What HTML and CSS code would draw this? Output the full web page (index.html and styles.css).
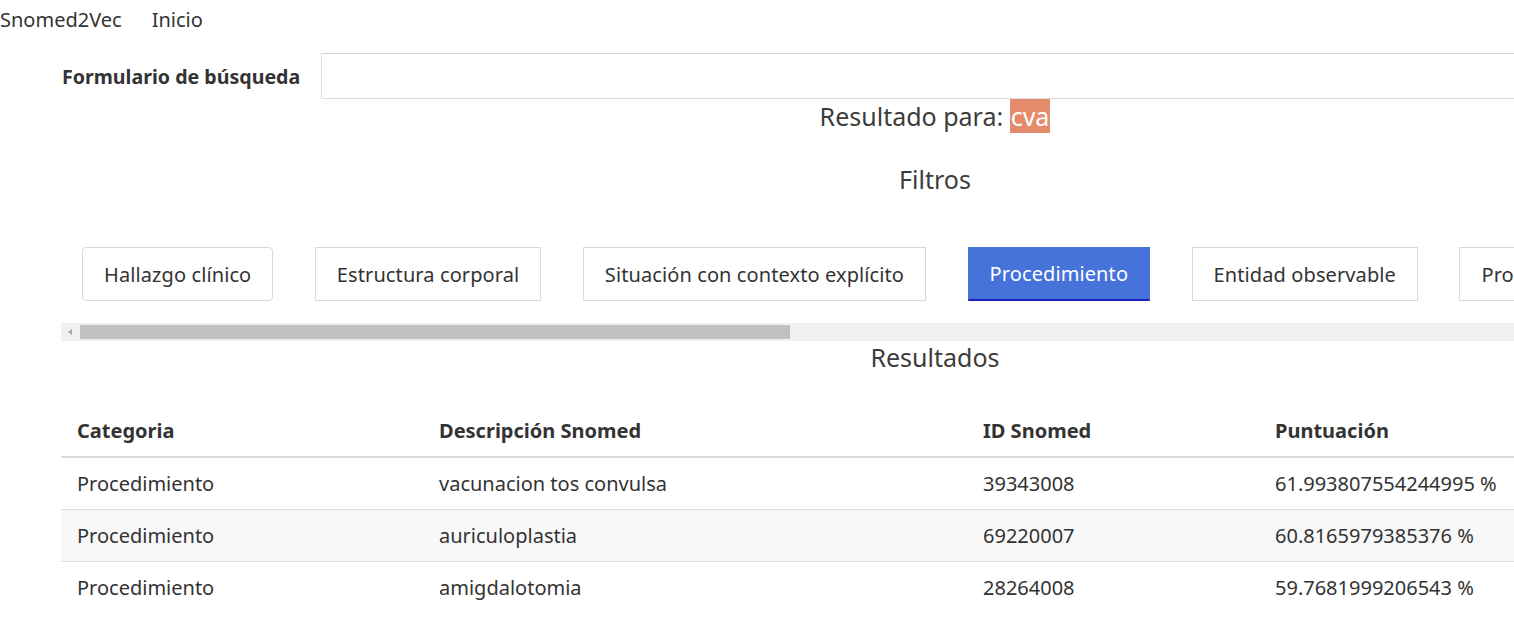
FILE: index.html
```html
<!DOCTYPE html>
<html lang="es">
<head>
<meta charset="utf-8">
<title>Snomed2Vec</title>
<link rel="stylesheet" href="styles.css">
</head>
<body>
<nav class="navbar">
  <a class="brand" href="#">Snomed2Vec</a>
  <a class="nav-link" href="#">Inicio</a>
</nav>
<main class="content">
  <form class="search-form">
    <label class="search-label" for="q">Formulario de búsqueda</label>
    <input class="search-input" id="q" type="text">
  </form>
  <h2 class="result-title">Resultado para: <mark class="query">cva</mark></h2>
  <h3 class="section-title filters-title">Filtros</h3>
  <div class="filters">
    <div class="filter-track">
      <button class="filter-btn first" type="button">Hallazgo clínico</button>
      <button class="filter-btn" type="button">Estructura corporal</button>
      <button class="filter-btn" type="button">Situación con contexto explícito</button>
      <button class="filter-btn active" type="button">Procedimiento</button>
      <button class="filter-btn" type="button">Entidad observable</button>
      <button class="filter-btn" type="button">Producto</button>
      <button class="filter-btn" type="button">Sustancia</button>
    </div>
    <div class="scrollbar">
      <span class="scroll-arrow"></span>
      <span class="scroll-thumb"></span>
    </div>
  </div>
  <h3 class="section-title results-title">Resultados</h3>
  <table class="results">
    <colgroup>
      <col class="c1"><col class="c2"><col class="c3"><col class="c4">
    </colgroup>
    <thead>
      <tr><th>Categoria</th><th>Descripción Snomed</th><th>ID Snomed</th><th>Puntuación</th></tr>
    </thead>
    <tbody>
      <tr><td>Procedimiento</td><td>vacunacion tos convulsa</td><td>39343008</td><td>61.993807554244995 %</td></tr>
      <tr><td>Procedimiento</td><td>auriculoplastia</td><td>69220007</td><td>60.8165979385376 %</td></tr>
      <tr><td>Procedimiento</td><td>amigdalotomia</td><td>28264008</td><td>59.7681999206543 %</td></tr>
    </tbody>
  </table>
</main>
</body>
</html>
```

FILE: styles.css
```css
html, body {
  margin: 0;
  padding: 0;
  overflow: hidden;
  background: #fff;
}
body {
  font-family: "Noto Sans", "Open Sans", sans-serif;
  color: #333;
  width: 1514px;
}
.navbar {
  height: 38px;
  display: flex;
  align-items: center;
  gap: 30px;
  font-size: 20px;
}
.navbar a {
  color: #333;
  text-decoration: none;
}
.content {
  margin-left: 61px;
  width: 1748px;
}
.search-form {
  margin: 15px 0 0;
  display: flex;
  align-items: center;
}
.search-label {
  width: 260px;
  padding-left: 1px;
  box-sizing: border-box;
  font-weight: bold;
  font-size: 19.6px;
  color: #333;
}
.search-input {
  flex: 1;
  height: 46px;
  box-sizing: border-box;
  border: 1px solid #dcdcdc;
  border-top-color: #d4d4d4;
  border-radius: 0;
  padding: 0 12px;
  font: inherit;
  outline: none;
}
.result-title {
  margin: 2px 0 0;
  text-align: center;
  font-weight: normal;
  font-size: 25px;
  line-height: 30px;
  color: #3c3c3c;
}
.query {
  background: #e58a6a;
  color: #fff;
  padding: 0 1px;
}
.section-title {
  margin: 0;
  text-align: center;
  font-weight: normal;
  font-size: 25px;
  line-height: 30px;
  color: #3c3c3c;
}
.filters-title {
  margin-top: 33px;
}
.filters {
  margin-top: 53px;
  overflow: hidden;
}
.filter-track {
  display: flex;
  gap: 41.5px;
  padding-left: 21px;
  white-space: nowrap;
}
.filter-btn {
  flex: none;
  height: 54px;
  padding: 0 21px;
  border: 1px solid #d9d9d9;
  background: #fff;
  color: #333;
  font-family: inherit;
  font-size: 20px;
  letter-spacing: 0.1px;
  border-radius: 0;
}
.filter-btn.first {
  border-radius: 4px;
}
.filter-btn.active {
  background: #4673d9;
  border-color: #4673d9;
  border-bottom: 2px solid #1d1fc4;
  color: #fff;
}
.scrollbar {
  margin-top: 22px;
  height: 18px;
  background: #f0f0f0;
  display: flex;
  align-items: center;
}
.scroll-arrow {
  width: 0;
  height: 0;
  margin-left: 7px;
  border-top: 3px solid transparent;
  border-bottom: 3px solid transparent;
  border-right: 4px solid #a3a3a3;
}
.scroll-thumb {
  margin-left: 8px;
  width: 710px;
  height: 14px;
  background: #c0c0c0;
}
.results-title {
  margin-top: 1px;
}
.results {
  margin-top: 33px;
  width: 1748px;
  border-collapse: collapse;
  table-layout: fixed;
  font-size: 20px;
}
.results .c1 { width: 362px; }
.results .c2 { width: 544px; }
.results .c3 { width: 292px; }
.results th {
  text-align: left;
  font-weight: bold;
  height: 51px;
  padding: 0 16px;
  border-bottom: 2px solid #dcdcdc;
  vertical-align: middle;
}
.results td {
  height: 51px;
  padding: 0 16px;
  border-top: 1px solid #dcdcdc;
  vertical-align: middle;
  color: #333;
}
.results tbody tr:first-child td {
  border-top: none;
}
.results tbody tr:nth-child(even) {
  background: #f8f8f8;
}
```
